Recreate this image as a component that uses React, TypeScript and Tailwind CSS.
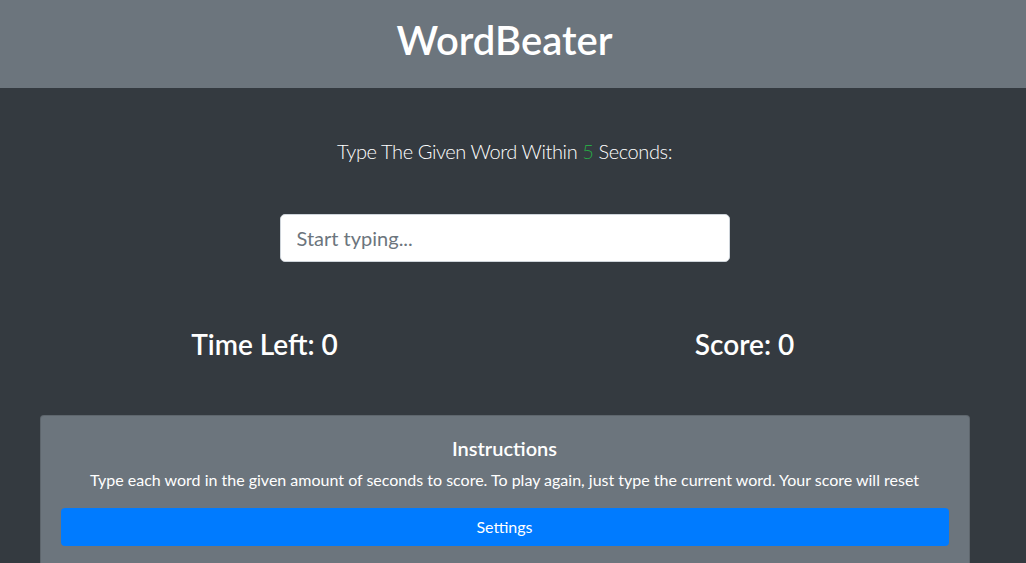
export default function App() {
  return (
    <div className="min-h-screen bg-[#343a40] text-white font-['Lato',sans-serif]">
      {/* header bar */}
      <header className="bg-[#6c757d] pr-[17px] pt-4 pb-6 text-center">
        <h1 className="text-[40px] leading-[48px] font-semibold">WordBeater</h1>
      </header>

      <main className="pr-[17px] pt-12 pb-10">
        <div className="mx-auto w-[930px] text-center">
          <p className="text-xl font-light leading-[30px] tracking-[-0.4px]">
            Type The Given Word Within <span className="text-[#28a745]">5</span> Seconds:
          </p>
          <input
            type="text"
            placeholder="Start typing..."
            className="mx-auto mt-12 block h-12 w-[450px] rounded-[5px] border border-[#ced4da] bg-white px-4 text-xl text-[#495057] outline-none placeholder:text-[#6c757d]"
          />

          {/* time & score */}
          <div className="-mx-[15px] mt-[65px] grid w-[960px] grid-cols-2">
            <h3 className="text-[28px] font-semibold leading-[34px]">Time Left: 0</h3>
            <h3 className="text-[28px] font-semibold leading-[34px]">Score: 0</h3>
          </div>

          {/* instructions card */}
          <div className="mt-[54px] rounded border border-black/[.125] bg-[#6c757d] p-5">
            <h5 className="mb-2 text-xl font-semibold leading-6">Instructions</h5>
            <p className="mb-4 text-base leading-6">
              Type each word in the given amount of seconds to score. To play again, just type the current word. Your score will reset
            </p>
            <button className="h-[38px] w-full rounded bg-[#007bff] text-base text-white">Settings</button>
          </div>
        </div>
      </main>
    </div>
  )
}
